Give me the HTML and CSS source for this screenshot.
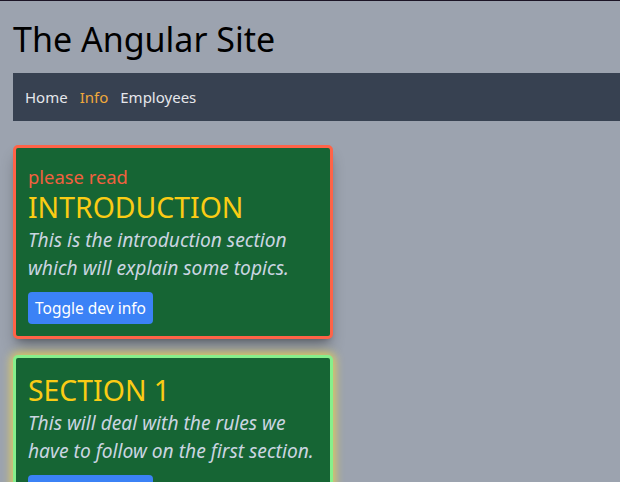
FILE: index.html
```html
<!DOCTYPE html>
<html lang="en">
<head>
<meta charset="utf-8">
<title>The Angular Site</title>
<link rel="stylesheet" href="styles.css">
</head>
<body>
<div class="page">
  <h1 class="site-title">The Angular Site</h1>
  <nav class="navbar">
    <a class="nav-link">Home</a>
    <a class="nav-link active">Info</a>
    <a class="nav-link">Employees</a>
  </nav>
  <main class="sections">
    <section class="card card-intro">
      <div class="note">please read</div>
      <h2 class="card-title">INTRODUCTION</h2>
      <p class="card-text">This is the introduction section which will explain some topics.</p>
      <button class="btn">Toggle dev info</button>
    </section>
    <section class="card card-section">
      <h2 class="card-title">SECTION 1</h2>
      <p class="card-text">This will deal with the rules we have to follow on the first section.</p>
      <button class="btn">Toggle dev info</button>
    </section>
  </main>
</div>
</body>
</html>
```

FILE: styles.css
```css
* { box-sizing: border-box; }
html, body { margin: 0; padding: 0; }
body {
  background: #9ca3af;
  border-top: 1px solid #1c1526;
  font-family: "Noto Sans", "Open Sans", sans-serif;
  color: #000;
  overflow: hidden;
}
.page {
  padding: 16px 0 0 13px;
}
.site-title {
  margin: 0;
  font-size: 34px;
  font-weight: 400;
  line-height: 44px;
  padding-bottom: 12px;
}
.navbar {
  display: flex;
  align-items: center;
  gap: 12px;
  height: 48px;
  padding: 0 12px;
  background: #374151;
  margin-right: -20px;
}
.nav-link {
  color: #e5e7eb;
  font-size: 15px;
  text-decoration: none;
}
.nav-link.active { color: #f0a93b; }
.sections {
  padding-top: 24px;
  display: flex;
  flex-direction: column;
  gap: 16px;
  width: 320px;
}
.card {
  background: #166534;
  border: 3px solid #ff6347;
  border-radius: 5px;
  padding: 14px 12px 12px;
  box-shadow: 0 10px 15px -3px rgba(0,0,0,0.3), 0 4px 6px -4px rgba(0,0,0,0.3);
}
.card-section {
  border-color: #86ef8c;
  box-shadow: 0 0 10px 2px rgba(250, 220, 60, 0.75);
}
.note {
  color: #f2603f;
  font-size: 18.4px;
  line-height: 25px;
  padding-top: 2px;
}
.card-title {
  margin: 0;
  color: #facc15;
  font-size: 28.4px;
  font-weight: 400;
  line-height: 36px;
}
.card-text {
  margin: 0 -8px 0 0;
  color: #cbd5e1;
  font-style: italic;
  font-size: 19.2px;
  line-height: 28px;
  padding-top: 1px;
}
.btn {
  display: block;
  margin-top: 10px;
  background: #3b82f6;
  color: #fff;
  border: none;
  border-radius: 4px;
  font-family: inherit;
  font-size: 15.5px;
  height: 32px;
  width: 125px;
  padding: 0;
  white-space: nowrap;
}
```
